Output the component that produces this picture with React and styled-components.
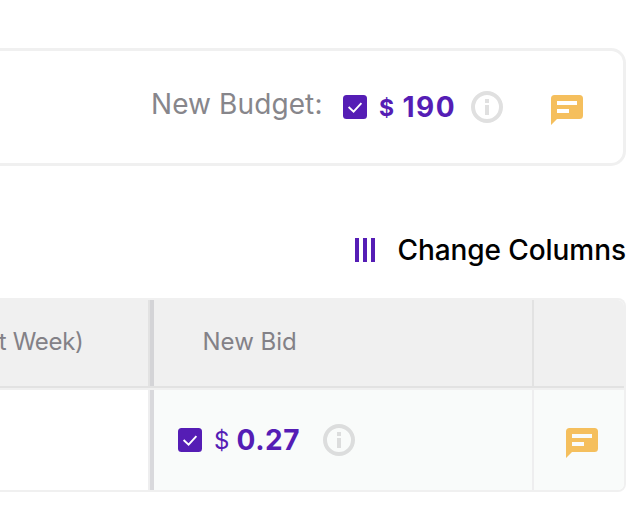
import styled, { createGlobalStyle } from "styled-components";

const GlobalStyle = createGlobalStyle`
  * {
    box-sizing: border-box;
  }

  body {
    margin: 0;
    background: #fff;
    font-family: Inter, "Liberation Sans", sans-serif;
    overflow: hidden;
  }
`;

const Page = styled.div`
  width: 642px;
  height: 518px;
  padding: 48px 16px 0 0;
`;

const BudgetCard = styled.div`
  display: flex;
  flex-direction: row;
  align-items: center;
  height: 118px;
  padding-left: 151px;
  border: 3px solid #f0f0f0;
  border-left: none;
  border-radius: 0 15px 15px 0;
`;

const BudgetLabel = styled.div`
  width: 192px;
  font-size: 28px;
  line-height: 34px;
  margin-top: -6px;
  letter-spacing: 0.1px;
  color: #87868b;
  white-space: nowrap;
`;

const CheckIcon = styled.svg`
  display: block;
  flex: none;
  width: 24px;
  height: 24px;
`;

const Price = styled.div`
  display: flex;
  flex-direction: row;
  align-items: baseline;
  width: ${(props) => props.$width}px;
  padding-left: 12px;
  padding-top: 2px;
  line-height: 34px;
  color: #551db5;
  white-space: nowrap;
`;

const Currency = styled.span`
  width: ${(props) => props.$width}px;
  margin-bottom: 1px;
  font-size: ${(props) => (props.$bold ? 23 : 24)}px;
  font-weight: ${(props) => (props.$bold ? 700 : 400)};
  transform: translateY(-1px);
`;

const Amount = styled.span`
  font-size: 28px;
  font-weight: ${(props) => props.$weight};
  letter-spacing: ${(props) => props.$spacing}px;
`;

const InfoIcon = styled.svg`
  display: block;
  flex: none;
  width: 32px;
  height: 32px;
`;

const NoteIcon = styled.svg`
  display: block;
  flex: none;
  width: 32px;
  height: 30px;
  margin-top: 6px;
  margin-left: ${(props) => props.$left || 0}px;
`;

const Toolbar = styled.div`
  display: flex;
  flex-direction: row;
  align-items: center;
  height: 132px;
  padding: 36px 0 0 355px;
`;

const ColumnBars = styled.div`
  display: flex;
  flex: none;
  gap: 4px;
  width: 42.5px;
  height: 24px;
`;

const Bar = styled.div`
  width: 4px;
  background: #551db5;
`;

const ToolbarLabel = styled.div`
  font-size: 28px;
  line-height: 34px;
  font-weight: 500;
  letter-spacing: -0.08px;
  color: #000;
  white-space: nowrap;
`;

const Table = styled.div`
  height: 194px;
  border: 2px solid #f0f0f0;
  border-left: none;
  border-radius: 0 8px 8px 0;
  overflow: hidden;
`;

const HeadRow = styled.div`
  display: grid;
  grid-template-columns: 150px 384px 1fr;
  height: 88px;
  background: #f0f0f0;
  border-bottom: 2px solid #e2e2e2;
  font-size: 24px;
  color: #838187;
`;

const BodyRow = styled.div`
  display: grid;
  grid-template-columns: 150px 384px 1fr;
  height: 102px;
  border-top: 2px solid #f0f0f0;
`;

const HeadCell = styled.div`
  display: flex;
  align-items: center;
  padding-left: ${(props) => props.$left || 0}px;
  padding-bottom: 4px;
  border-right: ${(props) => (props.$last ? "none" : "2px solid #e2e2e2")};
  border-left: ${(props) => (props.$pinned ? "4px solid #d4d4d7" : "none")};
  letter-spacing: ${(props) => props.$spacing || 0}px;
  white-space: nowrap;
`;

// the column title runs off the left edge
const ClippedTitle = styled.span`
  margin-left: -1.3px;
`;

const Cell = styled.div`
  display: flex;
  align-items: center;
  padding-left: ${(props) => props.$left || 0}px;
  border-right: ${(props) => (props.$last ? "none" : "2px solid #eeeeef")};
  border-left: ${(props) => (props.$pinned ? "4px solid #d9d9dc" : "none")};
  background: ${(props) => (props.$tinted ? "#f9fbfa" : "#fff")};
`;

function Check() {
  return (
    <CheckIcon viewBox="0 0 24 24">
      <rect width="24" height="24" rx="3.5" fill="#551db5" />
      <path d="M5.6 12 L10.6 16.6 L18.4 8.2" fill="none" stroke="#fff" strokeWidth="1.9" />
    </CheckIcon>
  );
}

function Info({ color }) {
  return (
    <InfoIcon viewBox="0 0 32 32">
      <circle cx="16" cy="16" r="14" fill="none" stroke={color} strokeWidth="4" />
      <path d="M14 8h4v4h-4zM14 14h4v10h-4z" fill={color} />
    </InfoIcon>
  );
}

function Note({ left }) {
  return (
    <NoteIcon viewBox="0 0 32 30" $left={left}>
      <path
        d="M3.5 0h25A3.5 3.5 0 0 1 32 3.5v17a3.5 3.5 0 0 1-3.5 3.5H6l-6 6V3.5A3.5 3.5 0 0 1 3.5 0zM6 6v4h20V6zM6 14v4h12v-4z"
        fill="#f5bf5d"
        fillRule="evenodd"
      />
    </NoteIcon>
  );
}

export default function App() {
  return (
    <Page>
      <GlobalStyle />
      <BudgetCard>
        <BudgetLabel>New Budget:</BudgetLabel>
        <Check />
        <Price $width={104}>
          <Currency $width={23.5} $bold>
            $
          </Currency>
          <Amount $weight={700} $spacing={1.5}>
            190
          </Amount>
        </Price>
        <Info color="#e0e0e0" />
        <Note left={48} />
      </BudgetCard>
      <Toolbar>
        <ColumnBars>
          <Bar />
          <Bar />
          <Bar />
        </ColumnBars>
        <ToolbarLabel>Change Columns</ToolbarLabel>
      </Toolbar>
      <Table>
        <HeadRow>
          <HeadCell $spacing={-0.3}>
            <ClippedTitle>t Week)</ClippedTitle>
          </HeadCell>
          <HeadCell $pinned $left={48.5}>
            New Bid
          </HeadCell>
          <HeadCell $last />
        </HeadRow>
        <BodyRow>
          <Cell />
          <Cell $pinned $tinted $left={24}>
            <Check />
            <Price $width={121}>
              <Currency $width={22.5}>$</Currency>
              <Amount $weight={700} $spacing={0.6}>
                0.27
              </Amount>
            </Price>
            <Info color="#dcdddd" />
          </Cell>
          <Cell $last $tinted $left={32}>
            <Note />
          </Cell>
        </BodyRow>
      </Table>
    </Page>
  );
}
